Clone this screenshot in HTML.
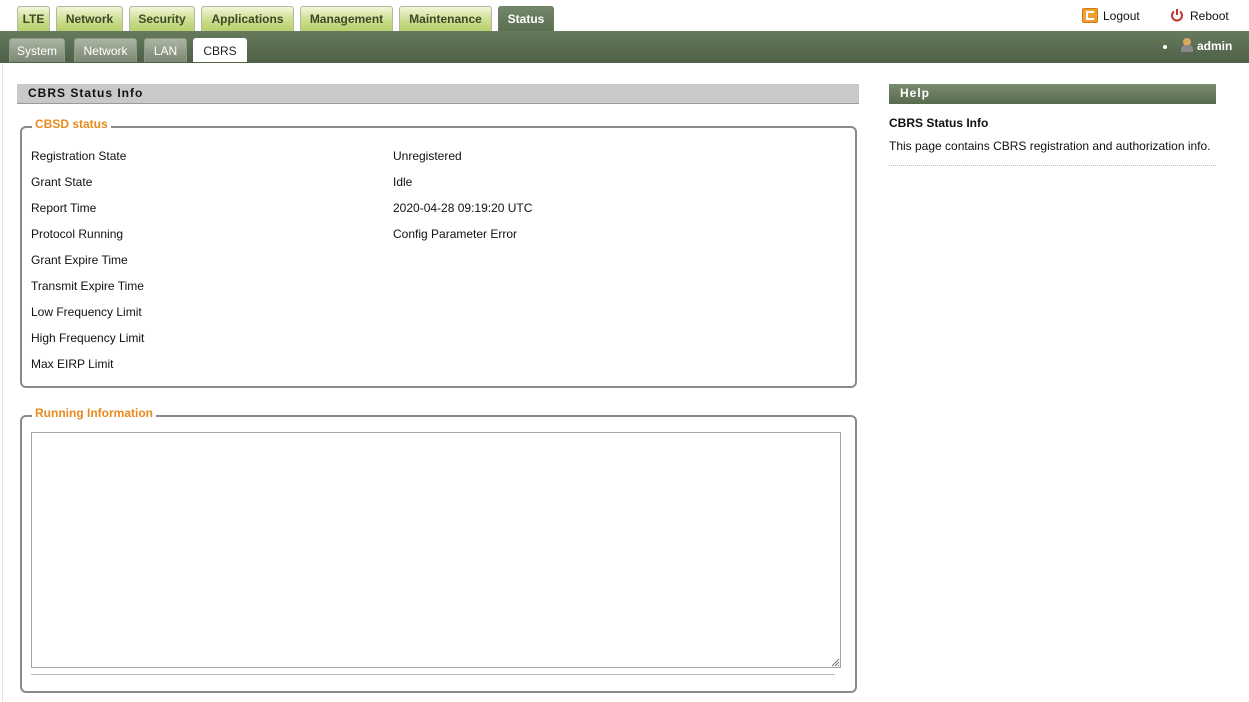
<!DOCTYPE html>
<html><head><meta charset="utf-8"><style>
*{margin:0;padding:0;box-sizing:border-box}
body{width:1249px;height:702px;background:#fff;font-family:"Liberation Sans",Arial,sans-serif;font-size:12px;color:#111;position:relative;overflow:hidden}
.abs{position:absolute}
.tab{position:absolute;top:6px;height:25px;border:1px solid #b5b5a5;border-bottom:none;border-radius:3px 3px 0 0;background:linear-gradient(#f2f6d8,#c9dc8a 60%,#b7cf6c);font-weight:bold;font-size:12px;color:#3d4a2a;text-align:center;line-height:24px}
.tab.act{background:linear-gradient(#73876a,#5b6f53);color:#fff;border-color:#6b7d63}
.bar{position:absolute;left:0;top:31px;width:1249px;height:32px;background:linear-gradient(#667a5d,#4e6147)}
.sub{position:absolute;top:38px;height:24px;border-radius:3px 3px 0 0;background:linear-gradient(#aab4a2,#7b8873);color:#fff;text-align:center;line-height:24px;font-size:12px;border:1px solid #8e9a86;border-bottom:none}
.sub.act{background:#fff;color:#222;border-color:#fff}
.hdr{position:absolute;top:84px;height:20px;font-weight:bold;font-size:12px;letter-spacing:1px;line-height:19px;padding-left:11px}
.fs{position:absolute;left:20px;width:837px;border:2px solid #8a8a8a;border-radius:6px}
.leg{position:absolute;left:32px;background:#fff;color:#e88a1c;font-weight:bold;padding:0 3px;font-size:12px}
.row{position:absolute;font-size:12px}
</style></head><body>
<div class="abs" style="left:2px;top:63px;width:1px;height:639px;background:#e4e4e4"></div>
<div class="tab" style="left:17px;width:33px">LTE</div>
<div class="tab" style="left:56px;width:67px">Network</div>
<div class="tab" style="left:129px;width:66px">Security</div>
<div class="tab" style="left:201px;width:93px">Applications</div>
<div class="tab" style="left:300px;width:93px">Management</div>
<div class="tab" style="left:399px;width:93px">Maintenance</div>
<div class="tab act" style="left:498px;width:56px">Status</div>
<div class="abs" style="left:1082px;top:8px;width:16px;height:15px;background:#f0a030;border-radius:2px;border:1px solid #d07a10"><div style="position:absolute;left:3px;top:2px;width:8px;height:9px;border:2px solid #fff;border-right:none"></div></div>
<div class="abs" style="left:1103px;top:9px;font-size:12px">Logout</div>
<svg class="abs" style="left:1170px;top:8px" width="14" height="14" viewBox="0 0 14 14"><path d="M4 3.5A5 5 0 1 0 10 3.5" fill="none" stroke="#c0302a" stroke-width="2"/><path d="M7 1V7" stroke="#c0302a" stroke-width="2"/></svg>
<div class="abs" style="left:1190px;top:9px;font-size:12px">Reboot</div>
<div class="bar"></div>
<div class="sub" style="left:9px;width:56px">System</div>
<div class="sub" style="left:74px;width:63px">Network</div>
<div class="sub" style="left:144px;width:43px">LAN</div>
<div class="sub act" style="left:193px;width:54px">CBRS</div>
<div class="abs" style="left:1163px;top:45px;width:4px;height:4px;border-radius:2px;background:#fff"></div>
<div class="abs" style="left:1183px;top:38px;width:8px;height:8px;border-radius:4px;background:#d9a860"></div>
<div class="abs" style="left:1181px;top:45px;width:12px;height:7px;border-radius:4px 4px 0 0;background:#888"></div>
<div class="abs" style="left:1197px;top:39px;color:#fff;font-weight:bold;font-size:12px">admin</div>
<div class="hdr" style="left:17px;width:842px;background:#c9c9c9;border-bottom:1px solid #9a9a9a;color:#111">CBRS Status Info</div>
<div class="hdr" style="left:889px;width:327px;background:linear-gradient(#7a8c70,#566a4e);color:#fff">Help</div>
<div class="abs" style="left:889px;top:116px;font-weight:bold">CBRS Status Info</div>
<div class="abs" style="left:889px;top:139px">This page contains CBRS registration and authorization info.</div>
<div class="abs" style="left:889px;top:165px;width:327px;border-top:1px dotted #bbb"></div>
<div class="fs" style="top:126px;height:262px"></div>
<div class="leg" style="top:117px">CBSD status</div>
<div class="row" style="left:31px;top:149px">Registration State</div><div class="row" style="left:393px;top:149px">Unregistered</div>
<div class="row" style="left:31px;top:175px">Grant State</div><div class="row" style="left:393px;top:175px">Idle</div>
<div class="row" style="left:31px;top:201px">Report Time</div><div class="row" style="left:393px;top:201px">2020-04-28 09:19:20 UTC</div>
<div class="row" style="left:31px;top:227px">Protocol Running</div><div class="row" style="left:393px;top:227px">Config Parameter Error</div>
<div class="row" style="left:31px;top:253px">Grant Expire Time</div>
<div class="row" style="left:31px;top:279px">Transmit Expire Time</div>
<div class="row" style="left:31px;top:305px">Low Frequency Limit</div>
<div class="row" style="left:31px;top:331px">High Frequency Limit</div>
<div class="row" style="left:31px;top:357px">Max EIRP Limit</div>
<div class="fs" style="top:415px;height:278px"></div>
<div class="leg" style="top:406px">Running Information</div>
<div class="abs" style="left:31px;top:432px;width:810px;height:236px;border:1px solid #a5a5a5"></div>
<svg class="abs" style="left:831px;top:658px" width="9" height="9"><path d="M1 8L8 1M4 8L8 4M7 8L8 7" stroke="#777" stroke-width="1"/></svg>
<div class="abs" style="left:31px;top:674px;width:804px;border-top:1px solid #bbb"></div>
</body></html>
